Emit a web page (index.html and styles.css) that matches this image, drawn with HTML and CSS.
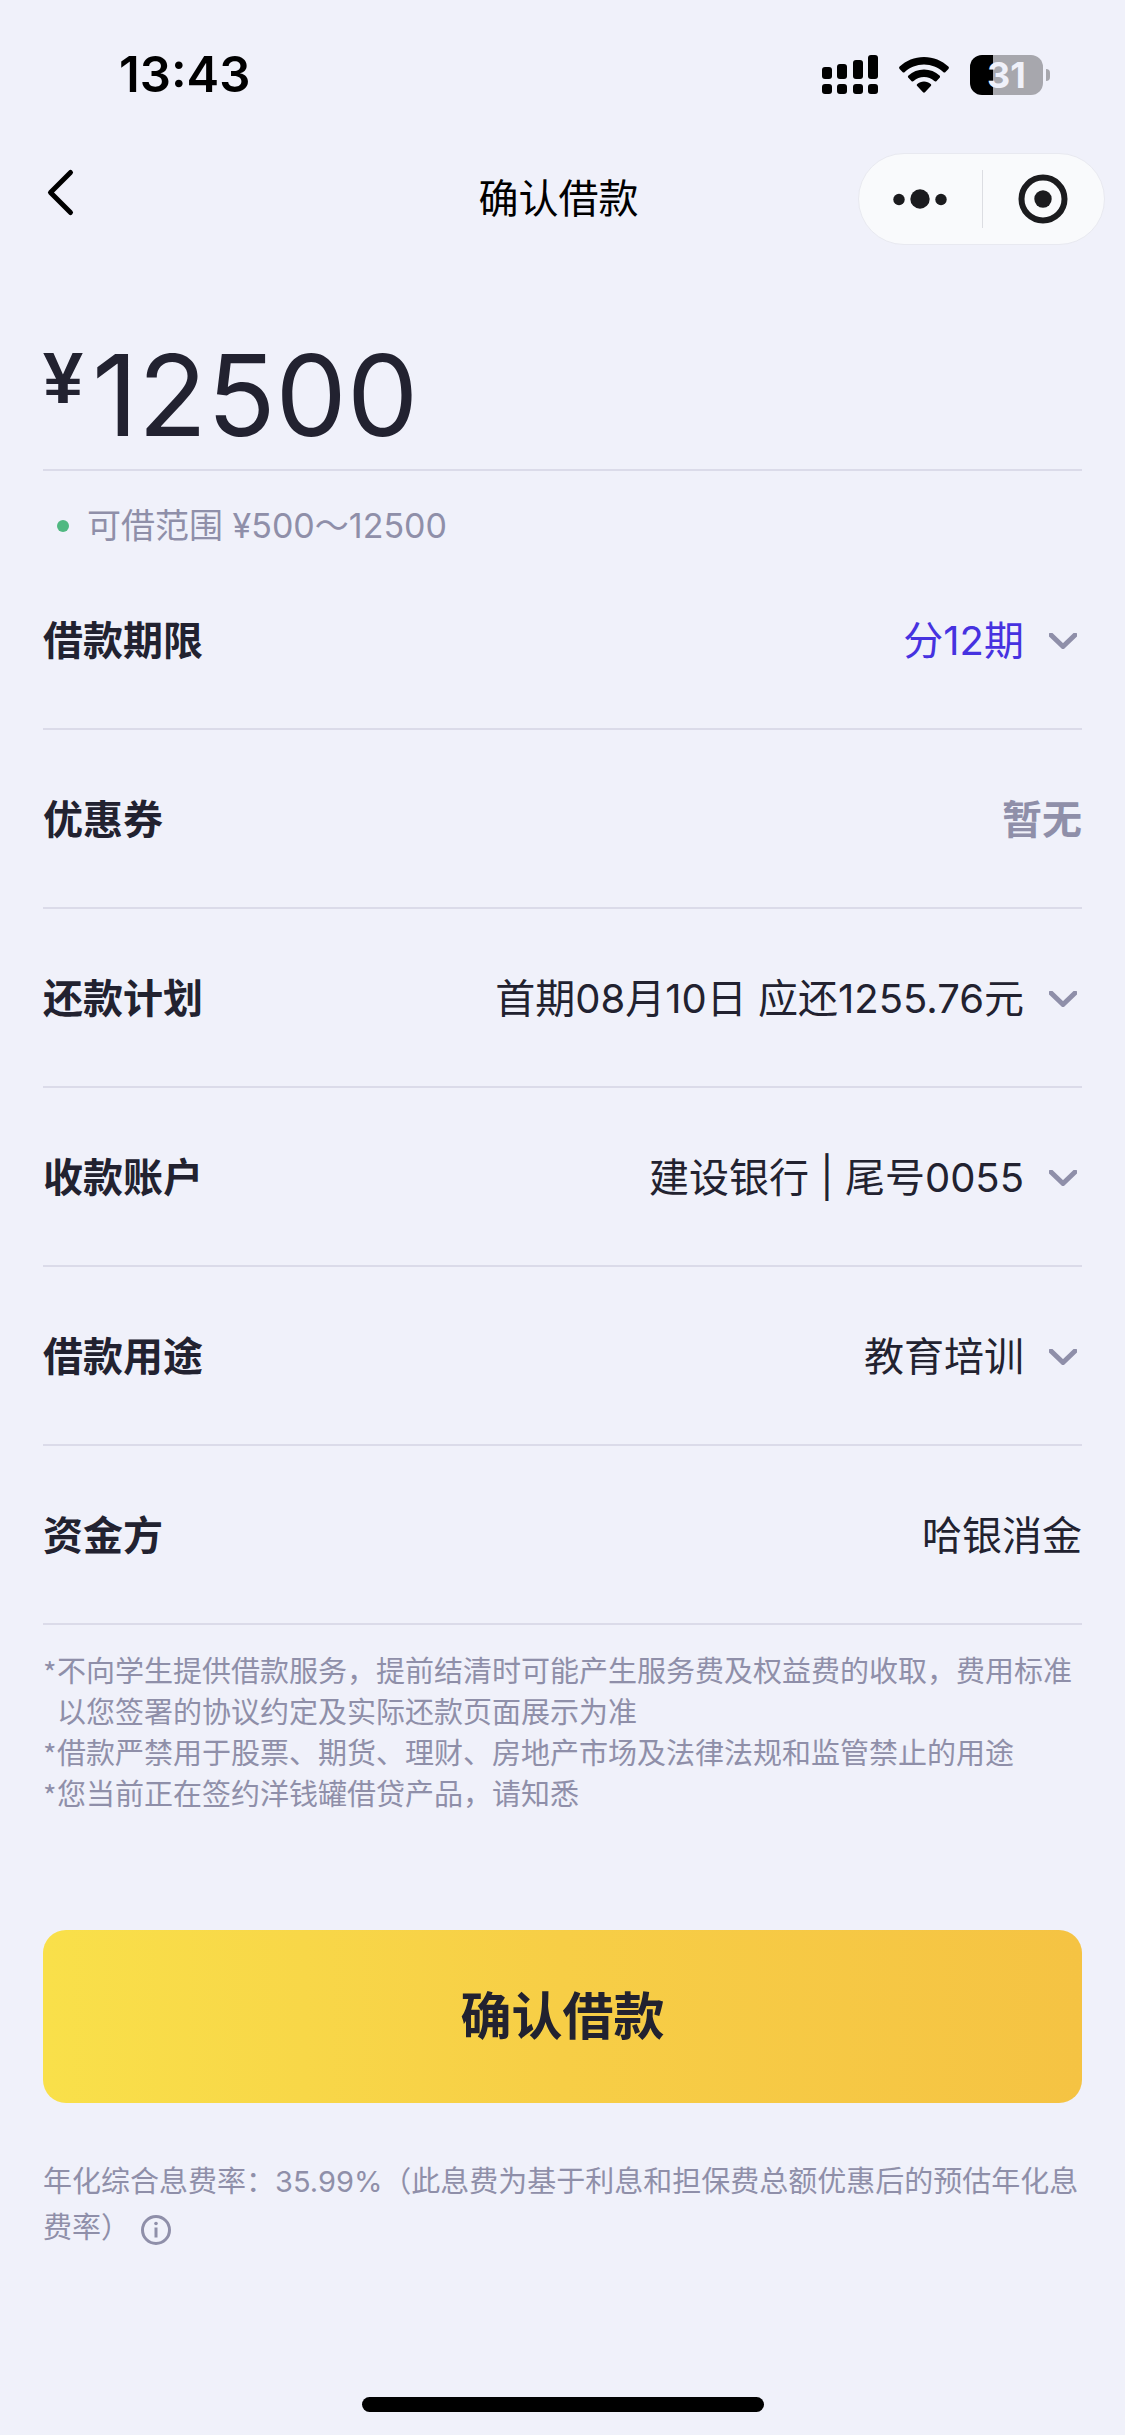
FILE: index.html
```html
<!DOCTYPE html>
<html lang="zh-CN">
<head>
  <meta charset="utf-8">
  <meta name="viewport" content="width=device-width, initial-scale=1">
  <title>确认借款</title>
  <link rel="stylesheet" href="styles.css">
</head>
<body>
  <div class="status-bar">
    <time class="clock">13:43</time>
    <div class="status-icons">
      <svg class="signal" viewBox="0 0 56 40" aria-hidden="true">
        <rect x="0" y="12" width="10" height="12" rx="3"/>
        <rect x="15" y="9" width="10" height="15" rx="3"/>
        <rect x="31" y="5" width="10" height="19" rx="3"/>
        <rect x="46" y="0" width="10" height="24" rx="3"/>
        <rect x="0" y="29" width="10" height="10" rx="3"/>
        <rect x="15" y="29" width="10" height="10" rx="3"/>
        <rect x="31" y="29" width="10" height="10" rx="3"/>
        <rect x="46" y="29" width="10" height="10" rx="3"/>
      </svg>
      <svg class="wifi" viewBox="0 0 50 36" aria-hidden="true">
        <path d="M25 0C15.5 0 7 3.700 .7 9.600c-.8.800-.8 1.600-.1 2.400l2.900 3c.7.700 1.500.7 2.300 0C11 10.300 17.700 7.500 25 7.500s14 2.800 19.200 7.500c.8.700 1.600.7 2.300 0l2.900-3c.7-.8.700-1.600-.1-2.400C43 3.700 34.500 0 25 0z"/>
        <path d="M25 12.500c-6 0-11.400 2.300-15.500 6-.8.700-.8 1.600-.1 2.300l3 3.100c.7.700 1.500.7 2.300.1 2.800-2.400 6.400-3.900 10.300-3.900s7.500 1.500 10.300 3.900c.8.600 1.600.6 2.300-.1l3-3.100c.7-.7.700-1.600-.1-2.300-4.100-3.700-9.500-6-15.500-6z"/>
        <path d="M25 24.500c-2.600 0-4.900.9-6.700 2.500-.7.600-.7 1.400-.1 2.100l5.600 6c.8.800 1.600.8 2.400 0l5.600-6c.6-.7.600-1.500-.1-2.100-1.800-1.600-4.100-2.500-6.700-2.500z"/>
      </svg>
      <div class="battery"><span class="battery-level">31</span><span class="battery-cap"></span></div>
    </div>
  </div>

  <header class="nav">
    <button class="back" type="button" aria-label="返回">
      <svg viewBox="0 0 64 90" aria-hidden="true"><path d="M58.500 18.500L38.500 38.500l20 20"/></svg>
    </button>
    <h1 class="nav-title">确认借款</h1>
    <div class="capsule">
      <button type="button" aria-label="更多">
        <svg viewBox="0 0 54 50" aria-hidden="true"><circle cx="6" cy="25.500" r="5.700"/><circle cx="27" cy="25" r="9.700"/><circle cx="48" cy="25.500" r="5.700"/></svg>
      </button>
      <button type="button" aria-label="关闭">
        <svg viewBox="0 0 54 50" aria-hidden="true"><circle class="ring" cx="27" cy="25" r="21.500"/><circle cx="27" cy="25" r="8.700"/></svg>
      </button>
    </div>
  </header>

  <main class="content">
    <div class="amount">
      <label class="currency" for="amount">¥</label>
      <input class="amount-input" id="amount" type="text" inputmode="numeric" value="12500">
    </div>
    <p class="range">可借范围 ¥500～12500</p>

    <div class="rows">
      <button class="row" type="button">
        <span class="row-label">借款期限</span>
        <span class="row-value accent">分12期</span>
        <svg class="chevron" viewBox="0 0 28 16" aria-hidden="true"><path d="M2 2l12 11.500L26 2"/></svg>
      </button>
      <div class="row">
        <span class="row-label">优惠券</span>
        <span class="row-value none">暂无</span>
      </div>
      <button class="row" type="button">
        <span class="row-label">还款计划</span>
        <span class="row-value">首期08月10日 应还1255.76元</span>
        <svg class="chevron" viewBox="0 0 28 16" aria-hidden="true"><path d="M2 2l12 11.500L26 2"/></svg>
      </button>
      <button class="row" type="button">
        <span class="row-label">收款账户</span>
        <span class="row-value">建设银行 | 尾号0055</span>
        <svg class="chevron" viewBox="0 0 28 16" aria-hidden="true"><path d="M2 2l12 11.500L26 2"/></svg>
      </button>
      <button class="row" type="button">
        <span class="row-label">借款用途</span>
        <span class="row-value">教育培训</span>
        <svg class="chevron" viewBox="0 0 28 16" aria-hidden="true"><path d="M2 2l12 11.500L26 2"/></svg>
      </button>
      <div class="row">
        <span class="row-label">资金方</span>
        <span class="row-value">哈银消金</span>
      </div>
    </div>

    <ul class="notes">
      <li>不向学生提供借款服务，提前结清时可能产生服务费及权益费的收取，费用标准以您签署的协议约定及实际还款页面展示为准</li>
      <li>借款严禁用于股票、期货、理财、房地产市场及法律法规和监管禁止的用途</li>
      <li>您当前正在签约洋钱罐借贷产品，请知悉</li>
    </ul>

    <button class="submit" type="button">确认借款</button>

    <p class="rate">年化综合息费率：35.99%（此息费为基于利息和担保费总额优惠后的预估年化息费率）<button class="info" type="button" aria-label="费率说明"><svg viewBox="0 0 30 30" aria-hidden="true"><circle class="info-ring" cx="15" cy="15" r="13.500"/><circle cx="15" cy="8.500" r="1.800"/><path d="M13.500 12.500h3v10h-3z"/></svg></button></p>
  </main>

  <div class="home-indicator"></div>
</body>
</html>
```

FILE: styles.css
```css
:root {
  --bg: #f0f1fa;
  --ink: #222230;
  --muted: #8f8fa9;
  --line: #dbdbe9;
  --accent: #4632e0;
  --gutter: 43px;
}

* {
  box-sizing: border-box;
}

body {
  margin: 0;
  min-height: 100vh;
  display: flex;
  flex-direction: column;
  background: var(--bg);
  color: var(--ink);
  font-family: Inter, "Noto Sans CJK SC", sans-serif;
  font-size: 40px;
}

button {
  padding: 0;
  border: 0;
  background: none;
  color: inherit;
  font: inherit;
  cursor: pointer;
}

svg {
  display: block;
}

/* Status bar */
.status-bar {
  display: flex;
  align-items: center;
  justify-content: space-between;
  height: 150px;
  padding: 0 75px 0 119px;
  color: #000;
}

.clock {
  font-size: 49px;
  font-weight: 600;
  line-height: 56px;
}

.status-icons {
  display: flex;
  align-items: center;
  gap: 21px;
}

.signal {
  width: 56px;
  height: 40px;
}

.wifi {
  width: 50px;
  height: 36px;
}

.battery {
  display: flex;
  align-items: center;
  gap: 3px;
}

.battery-level {
  width: 73px;
  height: 40px;
  border-radius: 12px;
  background: linear-gradient(90deg, #000 31%, #a7a7ad 31%);
  color: var(--bg);
  font-size: 36px;
  font-weight: 700;
  line-height: 40px;
  text-align: center;
}

.battery-cap {
  width: 4px;
  height: 12px;
  border-radius: 0 6px 6px 0;
  background: #a7a7ad;
}

/* Navigation bar */
.nav {
  display: grid;
  grid-template-columns: 1fr auto 1fr;
  align-items: center;
  padding: 3px 20px 0 12px;
}

.back {
  justify-self: start;
}

.back svg {
  width: 64px;
  height: 90px;
  fill: none;
  stroke: #000;
  stroke-width: 5;
  stroke-linecap: round;
  stroke-linejoin: round;
}

.nav-title {
  margin: 0;
  color: #000;
  font-size: 40px;
  font-weight: 400;
  line-height: 56px;
}

.capsule {
  justify-self: end;
  display: flex;
  width: 247px;
  height: 92px;
  border: 1px solid #e8e9f0;
  border-radius: 46px;
  background: #f9fafc;
}

.capsule button {
  flex: 1;
  display: grid;
  place-items: center;
}

.capsule button + button {
  position: relative;
}

.capsule button + button::before {
  content: "";
  position: absolute;
  left: 0;
  top: 16px;
  bottom: 16px;
  width: 1px;
  background: #dcdde2;
}

.capsule svg {
  width: 54px;
  height: 50px;
  fill: #1b1b1e;
}

.capsule .ring {
  fill: none;
  stroke: #1b1b1e;
  stroke-width: 6;
}

/* Loan form */
.content {
  padding: 85px var(--gutter) 0;
}

.amount {
  display: flex;
  align-items: flex-start;
  gap: 9px;
  height: 141px;
  border-bottom: 2px solid var(--line);
}

.currency {
  font-family: "Liberation Sans", "Noto Sans CJK SC", sans-serif;
  font-size: 72px;
  font-weight: 700;
  line-height: 96px;
}

.amount-input {
  flex: 1;
  min-width: 0;
  height: 130px;
  padding: 0;
  border: 0;
  outline: 0;
  background: none;
  color: inherit;
  font: 400 113px/130px Inter, sans-serif;
}

.range {
  display: flex;
  align-items: center;
  gap: 18px;
  margin: 0;
  padding: 30px 0 0 14px;
  color: var(--muted);
  font-size: 34px;
  line-height: 50px;
}

.range::before {
  content: "";
  width: 12px;
  height: 12px;
  border-radius: 50%;
  background: #50b881;
}

.row {
  display: flex;
  align-items: center;
  width: 100%;
  height: 179px;
  padding-top: 2px;
  border-bottom: 2px solid var(--line);
  line-height: 56px;
  text-align: left;
}

.row-label {
  flex: 1;
  font-weight: 700;
}

.accent {
  color: var(--accent);
}

.none {
  color: var(--muted);
  font-weight: 700;
}

.chevron {
  width: 28px;
  height: 16px;
  margin: 0 5px 0 25px;
  fill: none;
  stroke: var(--muted);
  stroke-width: 5;
  stroke-linecap: round;
  stroke-linejoin: round;
}

.notes {
  margin: 26px 0 0;
  padding: 0;
  color: var(--muted);
  font-size: 29px;
  line-height: 41px;
  list-style: none;
}

.notes li {
  display: flex;
}

.notes li::before {
  content: "*";
  flex: none;
  width: 14px;
  font-family: "Noto Sans CJK SC", sans-serif;
}

.submit {
  display: block;
  width: 100%;
  height: 173px;
  margin-top: 115px;
  padding-bottom: 8px;
  border-radius: 23px;
  background: linear-gradient(90deg, #f9e04a, #f7ce46 50%, #f5c343);
  font-size: 51px;
  font-weight: 700;
}

.rate {
  margin: 56px 0 0;
  color: var(--muted);
  font-size: 29px;
  line-height: 46px;
}

.info {
  margin-left: 11px;
  vertical-align: middle;
}

.info svg {
  width: 30px;
  height: 30px;
  fill: var(--muted);
}

.info .info-ring {
  fill: none;
  stroke: var(--muted);
  stroke-width: 3;
}

.home-indicator {
  width: 402px;
  height: 15px;
  margin: auto auto 23px;
  border-radius: 8px;
  background: #000;
}
```
